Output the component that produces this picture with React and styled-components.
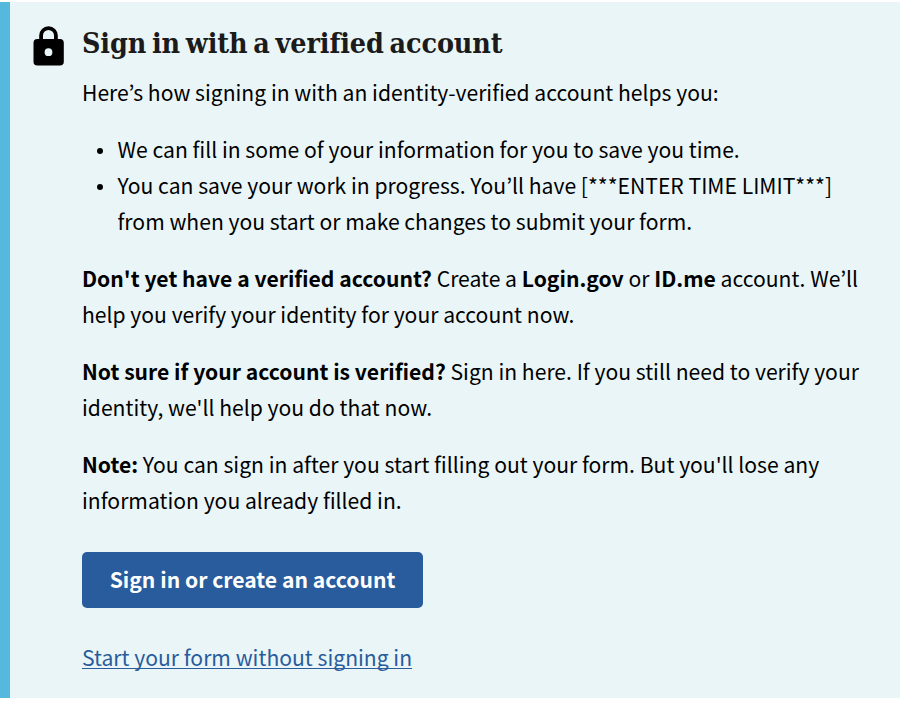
import React from "react";
import styled, { createGlobalStyle } from "styled-components";

const GlobalStyle = createGlobalStyle`
  *, *::before, *::after { box-sizing: border-box; }
  body { margin: 0; background: #fff; }
`;

const Alert = styled.section`
  display: flex;
  align-items: flex-start;
  width: 900px;
  height: 696px;
  margin-top: 2px;
  padding: 24px 24px 0 23px;
  border-left: 10px solid #55b9de;
  background: #eaf5f7;
  color: #000;
  font-family: "Noto Sans CJK KR", "Noto Sans CJK SC", sans-serif;
  font-size: 21.13px;
  line-height: 35.65px;
`;

const LockIcon = styled.svg`
  flex: none;
  width: 31px;
  height: 40px;
  margin-right: 18px;
`;

const Content = styled.div`
  flex: 1;
  min-width: 0;
`;

const Heading = styled.h2`
  margin: 0 0 13.1px;
  color: #1b1b1b;
  font-family: "DejaVu Serif Condensed", "DejaVu Serif", serif;
  font-size: 28.4px;
  font-weight: 700;
  font-stretch: condensed;
  line-height: 35px;
  letter-spacing: -0.1px;
  word-spacing: -3px;
  white-space: nowrap;
`;

const Paragraph = styled.p`
  margin: 0 0 21.7px;
`;

const BenefitList = styled.ul`
  margin: 0 0 21.7px;
  padding: 0;
  list-style: none;
`;

const Benefit = styled.li`
  display: flex;
`;

const Bullet = styled.span`
  flex: none;
  width: 6px;
  height: 6px;
  margin: 17px 14.5px 0 15px;
  border-radius: 50%;
  background: #000;
`;

const SignInButton = styled.button`
  display: block;
  width: 341px;
  height: 56px;
  margin: 34.5px 0 31.3px;
  padding: 0 0 2px;
  border: 0;
  border-radius: 5px;
  background: #285c9c;
  color: #fff;
  font: inherit;
  font-weight: 700;
`;

const StartLink = styled.a`
  color: #285c9c;
  text-decoration: underline;
  text-decoration-thickness: 1px;
  text-decoration-skip-ink: none;
  text-underline-offset: 2px;
`;

export default function App() {
  return (
    <>
      <GlobalStyle />
      <Alert>
        <LockIcon viewBox="0 0 31 40" aria-hidden="true">
          <path
            fillRule="evenodd"
            d="M6.2 13V9.5a9.3 9.3 0 0 1 18.6 0V13H27a3.8 3.8 0 0 1 3.8 3.8v19A3.8 3.8 0 0 1 27 39.6H4.3a3.8 3.8 0 0 1-3.8-3.8v-19A3.8 3.8 0 0 1 4.3 13zM10 13h11V9.5a5.5 5.5 0 0 0-11 0zM15.5 22.3a3.9 3.9 0 1 0 0 7.8 3.9 3.9 0 0 0 0-7.8z"
          />
        </LockIcon>
        <Content>
          <Heading>Sign in with a verified account</Heading>
          <Paragraph>Here’s how signing in with an identity-verified account helps you:</Paragraph>
          <BenefitList>
            <Benefit>
              <Bullet />
              <span>We can fill in some of your information for you to save you time.</span>
            </Benefit>
            <Benefit>
              <Bullet />
              <span>
                You can save your work in progress. You’ll have [***ENTER TIME LIMIT***] from when
                you start or make changes to submit your form.
              </span>
            </Benefit>
          </BenefitList>
          <Paragraph>
            <strong>Don't yet have a verified account?</strong> Create a <strong>Login.gov</strong>{" "}
            or <strong>ID.me</strong> account. We’ll help you verify your identity for your account
            now.
          </Paragraph>
          <Paragraph>
            <strong>Not sure if your account is verified?</strong> Sign in here. If you still need
            to verify your identity, we'll help you do that now.
          </Paragraph>
          <Paragraph>
            <strong>Note:</strong> You can sign in after you start filling out your form. But
            you'll lose any information you already filled in.
          </Paragraph>
          <SignInButton type="button">Sign in or create an account</SignInButton>
          <StartLink href="#start">Start your form without signing in</StartLink>
        </Content>
      </Alert>
    </>
  );
}
